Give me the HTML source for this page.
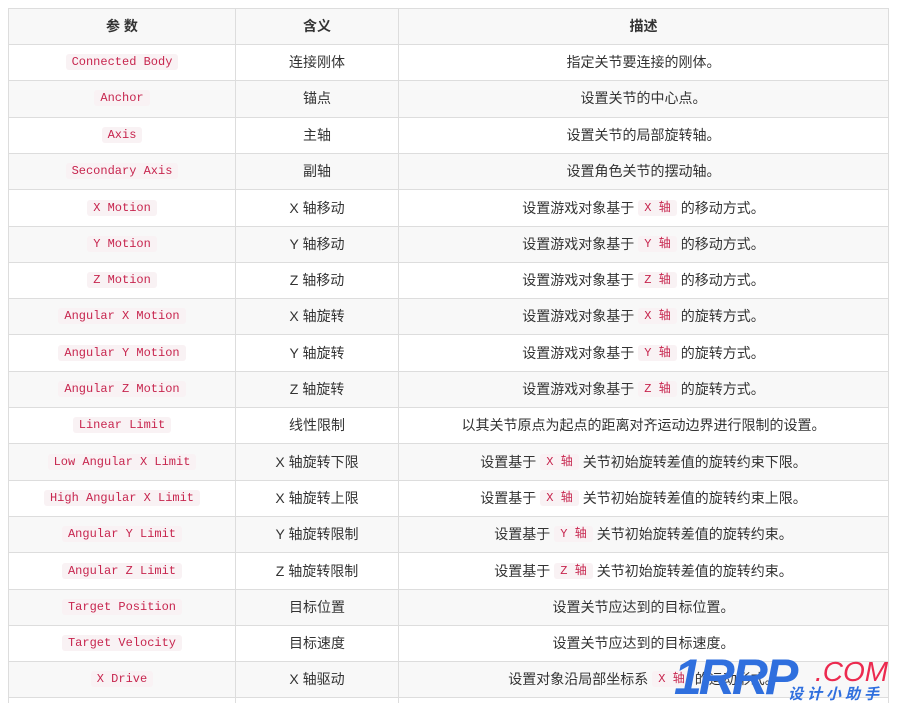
<!DOCTYPE html>
<html style="overflow:hidden"><head><meta charset="utf-8"><style>
html,body{margin:0;overflow:hidden}
body{background:#fff;width:898px;height:703px;position:relative;font-family:"Liberation Sans","Noto Sans CJK SC",sans-serif;color:#333;font-size:14px;line-height:20px}
.r{position:absolute;left:8px;width:881px;display:flex;border-top:1px solid #ddd;box-sizing:border-box}
.r.g{background:#f8f8f8}
.c{display:flex;align-items:center;justify-content:center;border-left:1px solid #ddd;box-sizing:border-box;height:100%;white-space:nowrap;padding-bottom:2px}
.c1{width:227px}.c2{width:163px}.c3{width:491px;border-right:1px solid #ddd}
code{display:inline-block;font-family:"Liberation Mono","Noto Sans CJK SC",monospace;font-size:12px;line-height:16px;color:#c7254e;background:#f9f2f4;padding:0 6px;border-radius:3px;margin:0 4px}
.wm{position:absolute;font-style:italic;font-weight:bold;line-height:1}
</style></head><body>
<div class="r g" style="top:8px;height:37px"><div class="c c1"><b>参 数</b></div><div class="c c2"><b>含义</b></div><div class="c c3"><b>描述</b></div></div>
<div class="r" style="top:44px;height:37px"><div class="c c1"><code>Connected Body</code></div><div class="c c2">连接刚体</div><div class="c c3">指定关节要连接的刚体。</div></div>
<div class="r g" style="top:80px;height:37px"><div class="c c1"><code>Anchor</code></div><div class="c c2">锚点</div><div class="c c3">设置关节的中心点。</div></div>
<div class="r" style="top:117px;height:37px"><div class="c c1"><code>Axis</code></div><div class="c c2">主轴</div><div class="c c3">设置关节的局部旋转轴。</div></div>
<div class="r g" style="top:153px;height:37px"><div class="c c1"><code>Secondary Axis</code></div><div class="c c2">副轴</div><div class="c c3">设置角色关节的摆动轴。</div></div>
<div class="r" style="top:189px;height:38px"><div class="c c1"><code>X Motion</code></div><div class="c c2">X 轴移动</div><div class="c c3">设置游戏对象基于<code>X 轴</code>的移动方式。</div></div>
<div class="r g" style="top:226px;height:37px"><div class="c c1"><code>Y Motion</code></div><div class="c c2">Y 轴移动</div><div class="c c3">设置游戏对象基于<code>Y 轴</code>的移动方式。</div></div>
<div class="r" style="top:262px;height:37px"><div class="c c1"><code>Z Motion</code></div><div class="c c2">Z 轴移动</div><div class="c c3">设置游戏对象基于<code>Z 轴</code>的移动方式。</div></div>
<div class="r g" style="top:298px;height:37px"><div class="c c1"><code>Angular X Motion</code></div><div class="c c2">X 轴旋转</div><div class="c c3">设置游戏对象基于<code>X 轴</code>的旋转方式。</div></div>
<div class="r" style="top:334px;height:38px"><div class="c c1"><code>Angular Y Motion</code></div><div class="c c2">Y 轴旋转</div><div class="c c3">设置游戏对象基于<code>Y 轴</code>的旋转方式。</div></div>
<div class="r g" style="top:371px;height:37px"><div class="c c1"><code>Angular Z Motion</code></div><div class="c c2">Z 轴旋转</div><div class="c c3">设置游戏对象基于<code>Z 轴</code>的旋转方式。</div></div>
<div class="r" style="top:407px;height:37px"><div class="c c1"><code>Linear Limit</code></div><div class="c c2">线性限制</div><div class="c c3">以其关节原点为起点的距离对齐运动边界进行限制的设置。</div></div>
<div class="r g" style="top:443px;height:38px"><div class="c c1"><code>Low Angular X Limit</code></div><div class="c c2">X 轴旋转下限</div><div class="c c3">设置基于<code>X 轴</code>关节初始旋转差值的旋转约束下限。</div></div>
<div class="r" style="top:480px;height:37px"><div class="c c1"><code>High Angular X Limit</code></div><div class="c c2">X 轴旋转上限</div><div class="c c3">设置基于<code>X 轴</code>关节初始旋转差值的旋转约束上限。</div></div>
<div class="r g" style="top:516px;height:37px"><div class="c c1"><code>Angular Y Limit</code></div><div class="c c2">Y 轴旋转限制</div><div class="c c3">设置基于<code>Y 轴</code>关节初始旋转差值的旋转约束。</div></div>
<div class="r" style="top:552px;height:38px"><div class="c c1"><code>Angular Z Limit</code></div><div class="c c2">Z 轴旋转限制</div><div class="c c3">设置基于<code>Z 轴</code>关节初始旋转差值的旋转约束。</div></div>
<div class="r g" style="top:589px;height:37px"><div class="c c1"><code>Target Position</code></div><div class="c c2">目标位置</div><div class="c c3">设置关节应达到的目标位置。</div></div>
<div class="r" style="top:625px;height:37px"><div class="c c1"><code>Target Velocity</code></div><div class="c c2">目标速度</div><div class="c c3">设置关节应达到的目标速度。</div></div>
<div class="r g" style="top:661px;height:37px"><div class="c c1"><code>X Drive</code></div><div class="c c2">X 轴驱动</div><div class="c c3">设置对象沿局部坐标系<code>X 轴</code>的运动形式。</div></div>
<div class="r" style="top:697px;height:37px"><div class="c c1"></div><div class="c c2"></div><div class="c c3"></div></div>
<div class="wm" style="left:674px;top:652px;font-size:50px;color:#2f6fde;font-family:'Liberation Sans',sans-serif;letter-spacing:-3px">1RRP</div>
<div class="wm" style="left:815px;top:658px;font-size:28px;color:#ec2a4f;font-weight:normal;font-family:'Liberation Sans',sans-serif">.COM</div>
<div class="wm" style="left:788px;top:686px;font-size:15px;color:#2f6fde;letter-spacing:4px;font-family:'Noto Sans CJK SC',sans-serif">设计小助手</div>
</body></html>
